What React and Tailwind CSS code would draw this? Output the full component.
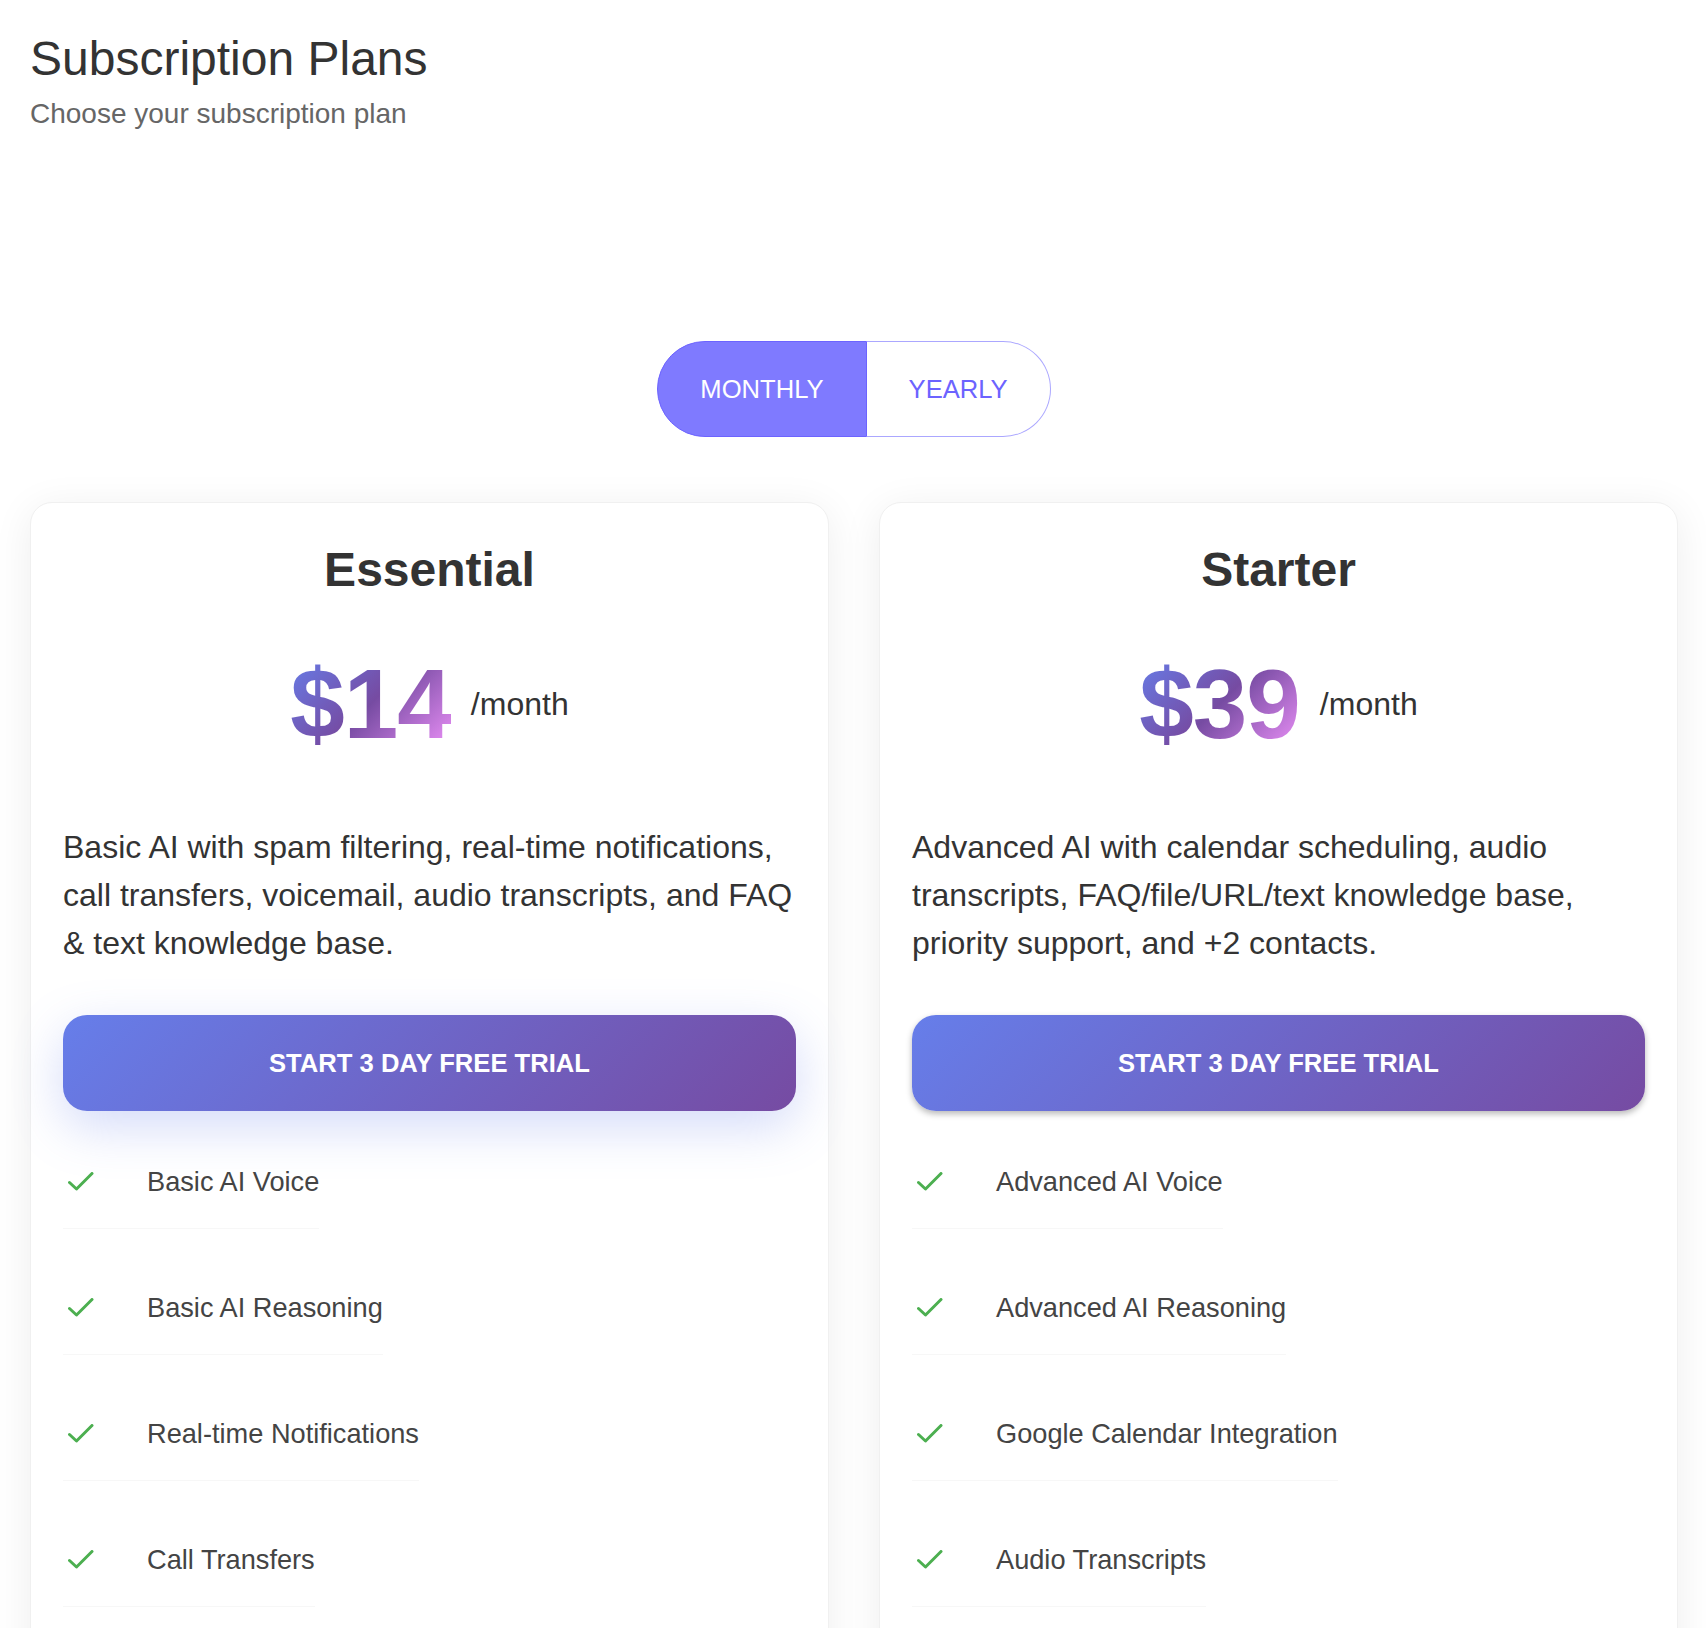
import { useState } from 'react';

const PLANS = [
  {
    name: 'Essential',
    price: '$14',
    description:
      'Basic AI with spam filtering, real-time notifications, call transfers, voicemail, audio transcripts, and FAQ & text knowledge base.',
    features: ['Basic AI Voice', 'Basic AI Reasoning', 'Real-time Notifications', 'Call Transfers'],
    glow: true,
  },
  {
    name: 'Starter',
    price: '$39',
    description:
      'Advanced AI with calendar scheduling, audio transcripts, FAQ/file/URL/text knowledge base, priority support, and +2 contacts.',
    features: ['Advanced AI Voice', 'Advanced AI Reasoning', 'Google Calendar Integration', 'Audio Transcripts'],
    glow: false,
  },
];

const Check = () => (
  <svg width="26" height="20" viewBox="0 0 26 20" fill="none">
    <polyline points="1.5,10.5 8.5,17 24,1.5" stroke="#4caf50" strokeWidth="3" strokeLinecap="round" strokeLinejoin="round" />
  </svg>
);

const PlanCard = ({ plan }) => (
  <div className="flex-1 bg-white rounded-[22px] border border-[#f0f0f0] shadow-[0_6px_40px_rgba(0,0,0,0.07)] px-[32px] pt-[39px] pb-[40px]">
    <h2 className="text-center text-[48px] leading-[56px] font-bold text-[#333]">{plan.name}</h2>

    <div className="flex items-center justify-center mt-[57px]">
      <span className="text-[98px] leading-none font-bold tracking-[-1px] bg-[linear-gradient(135deg,#667eea_0%,#764ba2_50%,#f093fb_100%)] bg-clip-text text-transparent">
        {plan.price}
      </span>
      <span className="ml-[20px] text-[32px] leading-[48px] text-[#333]">/month</span>
    </div>

    <p className="mt-[70px] text-[32px] leading-[48px] text-[#333]">{plan.description}</p>

    <button
      className={`mt-[48px] w-full h-[96px] rounded-[24px] bg-[linear-gradient(135deg,#667eea,#764ba2)] text-white text-[25.6px] font-bold uppercase ${
        plan.glow ? 'shadow-[0_16px_50px_rgba(102,126,234,0.28)]' : 'shadow-[0_3px_6px_rgba(0,0,0,0.28)]'
      }`}
    >
      Start 3 Day Free Trial
    </button>

    <ul className="mt-[26px]">
      {plan.features.map((f) => (
        <li key={f} className="w-fit flex items-center pt-[24px] pb-[25px] mb-[34px] border-b border-[#f7f7f7]">
          <span className="w-[84px] pl-[5px] flex items-center">
            <Check />
          </span>
          <span className="text-[27.2px] leading-[42px] text-[#444]">{f}</span>
        </li>
      ))}
    </ul>
  </div>
);

export default function App() {
  const [billing, setBilling] = useState('monthly');

  return (
    <div className="min-h-screen bg-white pt-[31px] pl-[30px] pr-[28px] font-['Liberation_Sans',Arial,sans-serif]">
      <h1 className="text-[48px] leading-[56px] text-[#333]">Subscription Plans</h1>
      <p className="mt-[7px] text-[28px] leading-[40px] text-[#666]">Choose your subscription plan</p>

      <div className="flex justify-center mt-[207px]">
        <div className="inline-flex">
          <button
            onClick={() => setBilling('monthly')}
            className={`h-[96px] px-[42px] text-[25.6px] rounded-l-full border ${
              billing === 'monthly' ? 'bg-[#7f7aff] text-white border-[#6c63ff]' : 'bg-white text-[#6c63ff] border-[#aba7ff] border-r-0'
            }`}
          >
            MONTHLY
          </button>
          <button
            onClick={() => setBilling('yearly')}
            className={`h-[96px] px-[42px] text-[25.6px] rounded-r-full border ${
              billing === 'yearly' ? 'bg-[#7f7aff] text-white border-[#6c63ff]' : 'bg-white text-[#6c63ff] border-[#aba7ff] border-l-0'
            }`}
          >
            YEARLY
          </button>
        </div>
      </div>

      <div className="flex gap-[50px] mt-[65px] pb-[40px]">
        {PLANS.map((p) => (
          <PlanCard key={p.name} plan={p} />
        ))}
      </div>
    </div>
  );
}
